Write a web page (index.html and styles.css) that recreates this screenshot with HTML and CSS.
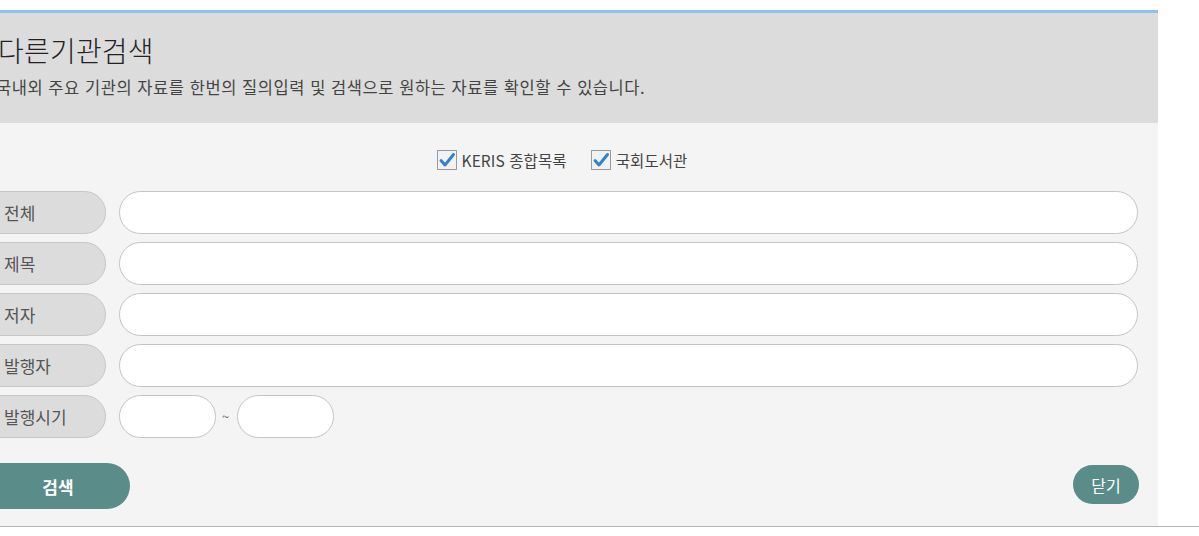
FILE: index.html
```html
<!DOCTYPE html>
<html lang="ko">
<head>
<meta charset="utf-8">
<title>다른기관검색</title>
<link rel="stylesheet" href="styles.css">
</head>
<body>
<div class="page">
  <div class="panel">
    <div class="header">
      <h1 class="title">다른기관검색</h1>
      <p class="desc">국내외 주요 기관의 자료를 한번의 질의입력 및 검색으로 원하는 자료를 확인할 수 있습니다.</p>
    </div>
    <div class="body">
      <div class="checks">
        <label class="check">
          <svg class="box" viewBox="0 0 20 20" width="20" height="20"><rect x="0.5" y="0.5" width="19" height="19" fill="#f2f2f2" stroke="#9a9a9a"/><path d="M4 10.5 L8 15 L16.5 4.5" fill="none" stroke="#2f86d0" stroke-width="3" stroke-linecap="round" stroke-linejoin="round"/></svg>
          <span>KERIS 종합목록</span>
        </label>
        <label class="check">
          <svg class="box" viewBox="0 0 20 20" width="20" height="20"><rect x="0.5" y="0.5" width="19" height="19" fill="#f2f2f2" stroke="#9a9a9a"/><path d="M4 10.5 L8 15 L16.5 4.5" fill="none" stroke="#2f86d0" stroke-width="3" stroke-linecap="round" stroke-linejoin="round"/></svg>
          <span>국회도서관</span>
        </label>
      </div>
      <div class="rows">
        <div class="row"><span class="label">전체</span><input class="field" type="text"></div>
        <div class="row"><span class="label">제목</span><input class="field" type="text"></div>
        <div class="row"><span class="label">저자</span><input class="field" type="text"></div>
        <div class="row"><span class="label">발행자</span><input class="field" type="text"></div>
        <div class="row"><span class="label">발행시기</span><input class="field short" type="text"><span class="tilde">~</span><input class="field short" type="text"></div>
      </div>
      <div class="actions">
        <button class="btn search" type="button">검색</button>
        <button class="btn close" type="button">닫기</button>
      </div>
    </div>
  </div>
</div>
</body>
</html>
```
FILE: styles.css
```css
html, body {
  margin: 0;
  padding: 0;
  background: #ffffff;
  font-family: "Noto Sans CJK KR", "Noto Sans", sans-serif;
  overflow: hidden;
}
.page {
  padding-top: 10px;
  border-bottom: 1px solid #b5b5b5;
}
.panel {
  margin-left: -34px;
  width: 1192px;
}
.header {
  border-top: 3px solid #8fc0ee;
  background: #dcdcdc;
  height: 113px;
  box-sizing: border-box;
  padding: 17px 0 0 32px;
}
.title {
  margin: 0;
  font-size: 28px;
  line-height: 40px;
  font-weight: 300;
  color: #222;
  letter-spacing: 0.2px;
}
.desc {
  margin: 6px 0 0 -2px;
  font-size: 16.5px;
  line-height: 22px;
  color: #444;
  letter-spacing: 0.55px;
}
.body {
  background: #f4f4f4;
  height: 403px;
  box-sizing: border-box;
  padding: 26px 20px 0 20px;
}
.checks {
  display: flex;
  justify-content: center;
  gap: 24px;
  height: 22px;
  align-items: center;
}
.check {
  display: flex;
  align-items: center;
  gap: 5px;
  font-size: 15.5px;
  color: #444;
  letter-spacing: 0.1px;
}
.box {
  display: block;
}
.rows {
  margin-top: 20px;
  display: flex;
  flex-direction: column;
  gap: 8px;
}
.row {
  display: flex;
  align-items: center;
  height: 43px;
}
.label {
  width: 120px;
  height: 43px;
  box-sizing: border-box;
  border: 1px solid #c6c6c6;
  background: #dcdcdc;
  border-radius: 0 22px 22px 0;
  padding-left: 17px;
  display: flex;
  align-items: center;
  font-size: 17px;
  color: #555;
  flex-shrink: 0;
}
.field {
  margin: 0 0 0 13px;
  flex: 1;
  height: 43px;
  box-sizing: border-box;
  border: 1px solid #c4c4c4;
  border-radius: 22px;
  background: #fff;
  padding: 0 18px;
  outline: none;
  font-family: inherit;
}
.field.short {
  flex: 0 0 97px;
  width: 97px;
}
.tilde {
  margin-left: 6px;
  margin-right: -7px;
  font-size: 13px;
  color: #666;
  width: 9px;
}
.actions {
  margin-top: 25px;
  display: flex;
  justify-content: space-between;
  align-items: center;
}
.btn {
  border: none;
  background: #5a8c89;
  color: #fff;
  font-family: inherit;
  cursor: pointer;
}
.search {
  width: 144px;
  height: 46px;
  border-radius: 0 23px 23px 0;
  font-size: 17px;
  font-weight: 700;
}
.close {
  width: 66px;
  height: 39px;
  border-radius: 20px;
  font-size: 16px;
  margin-right: -1px;
  margin-top: -3px;
}
```
